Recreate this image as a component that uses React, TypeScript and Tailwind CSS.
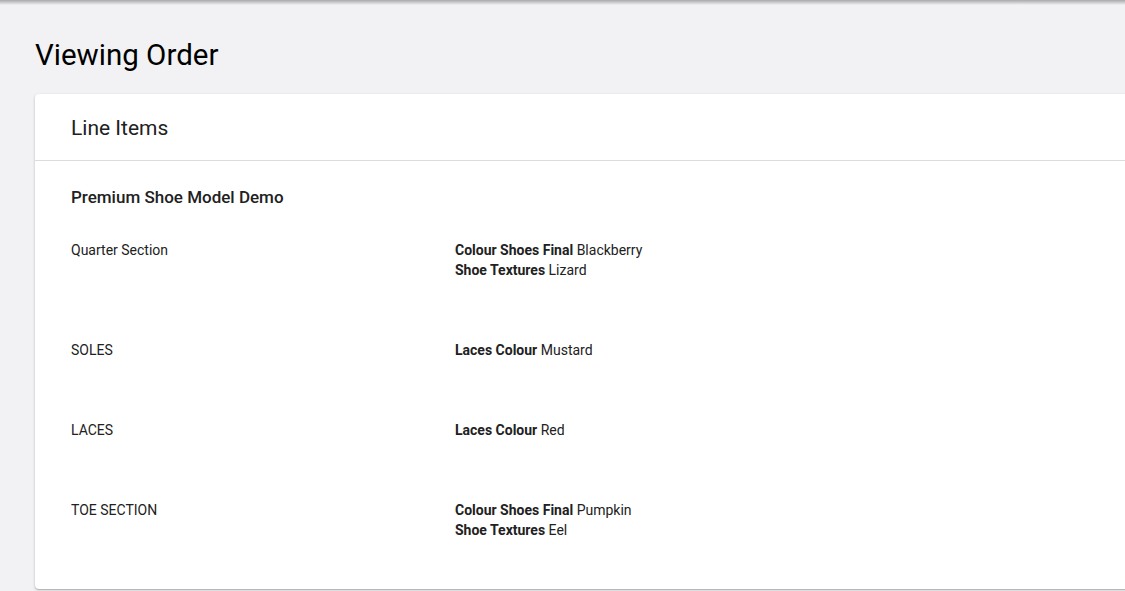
const rows = [
  {
    label: "Quarter Section",
    values: [
      ["Colour Shoes Final", "Blackberry"],
      ["Shoe Textures", "Lizard"],
    ],
  },
  { label: "SOLES", values: [["Laces Colour", "Mustard"]] },
  { label: "LACES", values: [["Laces Colour", "Red"]] },
  {
    label: "TOE SECTION",
    values: [
      ["Colour Shoes Final", "Pumpkin"],
      ["Shoe Textures", "Eel"],
    ],
  },
];

export default function App() {
  return (
    <div className="h-[591px] overflow-hidden bg-[#f2f2f4] font-['Roboto',sans-serif] text-[#212121]">
      <div className="h-[5px] bg-gradient-to-b from-[#a9a9ab] to-[#f2f2f4]" />
      <div className="pl-[35px]">
        <h1 className="pt-[32px] text-[29.5px] leading-[36px] text-black">Viewing Order</h1>
        <div className="mt-[21px] w-[1200px] rounded-[4px] bg-white shadow-[0_1px_3px_rgba(0,0,0,0.2),0_1px_1px_rgba(0,0,0,0.14)]">
          <div className="flex h-[67px] items-center border-b border-[#dcdcdc] px-[36px] pt-[2px]">
            <h2 className="text-[21px] leading-[28px]">Line Items</h2>
          </div>
          <div className="px-[36px] pt-[24px] pb-[20px]">
            <h3 className="text-[17px] font-medium leading-[24px]">Premium Shoe Model Demo</h3>
            {rows.map((row) => (
              <div key={row.label} className="flex pt-[31px] pb-[29px] text-[14px] leading-[20px]">
                <div className="w-[384px]">{row.label}</div>
                <div>
                  {row.values.map(([k, v]) => (
                    <div key={k}>
                      <span className="font-bold">{k}</span> {v}
                    </div>
                  ))}
                </div>
              </div>
            ))}
          </div>
        </div>
      </div>
    </div>
  );
}
